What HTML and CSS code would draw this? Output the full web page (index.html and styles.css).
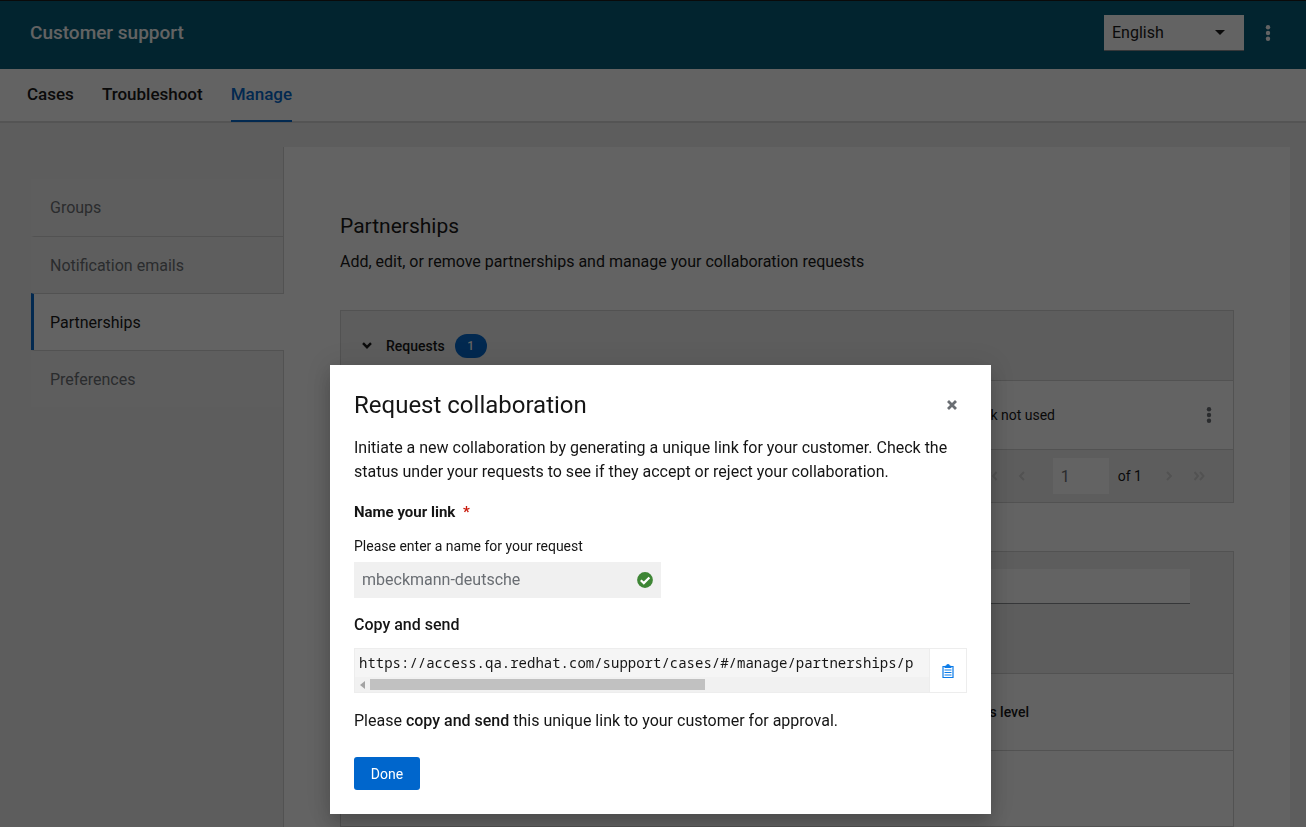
FILE: index.html
```
<!DOCTYPE html>
<html lang="en">
<head>
<meta charset="utf-8">
<meta name="viewport" content="width=device-width, initial-scale=1">
<title>Customer support</title>
<link rel="stylesheet" href="styles.css">
</head>
<body>
<header class="masthead">
  <p class="masthead-title">Customer support</p>
  <div class="masthead-tools">
    <select class="language" aria-label="Language"><option>English</option></select>
    <button class="kebab kebab-light" type="button" aria-label="More options">
      <svg width="6" height="16" viewBox="0 0 6 16" fill="currentColor"><circle cx="3" cy="2.3" r="2.2"/><circle cx="3" cy="8" r="2.2"/><circle cx="3" cy="13.7" r="2.2"/></svg>
    </button>
  </div>
</header>
<nav class="primary-nav" aria-label="Primary">
  <a href="#cases">Cases</a>
  <a href="#troubleshoot">Troubleshoot</a>
  <a href="#manage" class="current" aria-current="page">Manage</a>
</nav>
<main class="workspace">
  <nav class="side-tabs" aria-label="Manage">
    <a href="#groups">Groups</a>
    <a href="#notifications">Notification emails</a>
    <a href="#partnerships" class="current" aria-current="page">Partnerships</a>
    <a href="#preferences">Preferences</a>
  </nav>
  <section class="panel">
    <h1>Partnerships</h1>
    <p class="lead">Add, edit, or remove partnerships and manage your collaboration requests</p>
    <div class="card requests">
      <div class="card-head">
        <button class="toggle" type="button" aria-expanded="true">
          <svg width="10" height="7" viewBox="0 0 10 7" fill="none" stroke="currentColor" stroke-width="2.4"><path d="M1 1.2 5 5.2 9 1.2"/></svg>
          Requests
        </button>
        <span class="badge">1</span>
      </div>
      <div class="card-row">
        <span class="status">Link not used</span>
        <button class="kebab" type="button" aria-label="Request actions">
          <svg width="6" height="16" viewBox="0 0 6 16" fill="currentColor"><circle cx="3" cy="2.3" r="2.2"/><circle cx="3" cy="8" r="2.2"/><circle cx="3" cy="13.7" r="2.2"/></svg>
        </button>
      </div>
      <div class="pager">
        <button type="button" aria-label="First page" disabled><svg width="12" height="10" viewBox="0 0 12 10" fill="none" stroke="currentColor" stroke-width="2"><path d="M5 1 1.500 5 5 9M10.500 1 7 5l3.500 4"/></svg></button>
        <button type="button" aria-label="Previous page" disabled><svg width="12" height="10" viewBox="0 0 12 10" fill="none" stroke="currentColor" stroke-width="2"><path d="M8 1 4 5l4 4"/></svg></button>
        <input type="text" value="1" aria-label="Current page" disabled>
        <span class="pager-total">of 1</span>
        <button type="button" aria-label="Next page" disabled><svg width="12" height="10" viewBox="0 0 12 10" fill="none" stroke="currentColor" stroke-width="2"><path d="m4 1 4 4-4 4"/></svg></button>
        <button type="button" aria-label="Last page" disabled><svg width="12" height="10" viewBox="0 0 12 10" fill="none" stroke="currentColor" stroke-width="2"><path d="M1.500 1 5 5 1.500 9M7 1l3.500 4L7 9"/></svg></button>
      </div>
    </div>
    <div class="card">
      <div class="card-filter"><input type="search" aria-label="Search partnerships"></div>
      <div class="card-columns"><span class="status">Access level</span></div>
      <div class="card-entry"></div>
    </div>
  </section>
</main>
<div class="backdrop">
  <div class="modal" role="dialog" aria-modal="true" aria-labelledby="modal-title">
    <div class="modal-head">
      <h2 id="modal-title">Request collaboration</h2>
      <button class="close" type="button" aria-label="Close">
        <svg width="10" height="10" viewBox="0 0 10 10" stroke="currentColor" stroke-width="2.8" stroke-linecap="square"><path d="m2 2 6 6M8 2 2 8"/></svg>
      </button>
    </div>
    <p class="intro">Initiate a new collaboration by generating a unique link for your customer. Check the status under your requests to see if they accept or reject your collaboration.</p>
    <label class="field-label" for="link-name">Name your link <span class="required">*</span></label>
    <p class="hint" id="link-hint">Please enter a name for your request</p>
    <div class="name-field">
      <input id="link-name" type="text" value="mbeckmann-deutsche" aria-describedby="link-hint" disabled>
      <svg width="16" height="16" viewBox="0 0 16 16"><circle cx="8" cy="8" r="7.900" fill="#3e8635"/><path d="m3.800 8.200 3 2.900 5.600-5.700" fill="none" stroke="#fff" stroke-width="2.200"/></svg>
    </div>
    <h3>Copy and send</h3>
    <div class="copy-box">
      <div class="copy-scroll">
        <code>https://access.qa.redhat.com/support/cases/#/manage/partnerships/p</code>
        <div class="scrollbar">
          <svg width="5" height="8" viewBox="0 0 5 8"><path d="M5 0v8L0 4z" fill="#a3a3a3"/></svg>
          <div class="track"><div class="thumb"></div></div>
        </div>
      </div>
      <button class="copy" type="button" aria-label="Copy link">
        <svg width="12" height="14" viewBox="0 0 12 14"><path d="M1 2.500h10v11H1z" fill="#fff" stroke="#0a7be8" stroke-width="1.200"/><path d="M2.500 4V2l1.700-.5a1.800 1.500 0 0 1 3.600 0L9.500 2v2z" fill="#0a7be8"/><path d="M2.500 6h7M2.500 8.500h7M2.500 11h7" stroke="#0a7be8" stroke-width="1"/></svg>
      </button>
    </div>
    <p class="outro">Please <strong>copy and send</strong> this unique link to your customer for approval.</p>
    <button class="done" type="button">Done</button>
  </div>
</div>
</body>
</html>
```
FILE: styles.css
```
* { box-sizing: border-box; }

body {
  display: flex;
  flex-direction: column;
  height: 100vh;
  margin: 0;
  overflow: hidden;
  background: #f0f0f0;
  color: #151515;
  font-family: Roboto, "Liberation Sans", sans-serif;
  font-size: 16px;
  line-height: 24px;
}

h1, h2, h3, p { margin: 0; font-weight: 400; }
a { color: inherit; text-decoration: none; }
button, input, select { margin: 0; border: 0; color: inherit; font: inherit; }
button {
  display: flex;
  align-items: center;
  justify-content: center;
  padding: 0;
  background: none;
}

.masthead {
  display: flex;
  flex: none;
  align-items: center;
  justify-content: space-between;
  height: 69px;
  padding: 0 28px 4px 30px;
  border-top: 1px solid #151515;
  background: #005a77;
  color: #fff;
}
.masthead-title { font-size: 19px; font-weight: 500; line-height: 26px; }
.masthead-tools { display: flex; align-items: center; gap: 14px; }
.language {
  width: 140px;
  height: 36px;
  padding: 0 24px 0 8px;
  appearance: none;
  border-bottom: 1px solid #8a8d90;
  border-radius: 0;
  background: #fff url("data:image/svg+xml,%3Csvg xmlns='http://www.w3.org/2000/svg' width='10' height='5'%3E%3Cpath d='M0 0h10L5 5z' fill='%23151515'/%3E%3C/svg%3E") no-repeat right 19px center;
  color: #151515;
}
.kebab { width: 20px; height: 32px; color: #6a6e73; }
.kebab-light { color: #fff; }

.primary-nav {
  display: flex;
  flex: none;
  gap: 28px;
  height: 54px;
  padding: 0 27px;
  border-bottom: 2px solid #d8d8d8;
  background: #fff;
  font-size: 17px;
  font-weight: 500;
  line-height: 51px;
}
.primary-nav .current {
  height: 53px;
  border-bottom: 2px solid #06c;
  color: #06c;
}

.workspace {
  display: grid;
  flex: 1;
  grid-template-columns: 252px 1fr;
  padding: 24px 16px 0 31px;
}
.side-tabs { padding-top: 32px; color: #6a6e73; }
.side-tabs a {
  display: block;
  height: 57px;
  padding-left: 16px;
  border-left: 3px solid #f2f2f2;
  background: #f2f2f2;
  line-height: 57px;
}
.side-tabs a + a { border-top: 1px solid #d2d2d2; }
.side-tabs .current {
  position: relative;
  margin-right: -1px;
  border-left-color: #06c;
  background: #fff;
  color: #151515;
}

.panel {
  padding: 63px 56px 0;
  border-left: 1px solid #d2d2d2;
  background: #fff;
}
.panel h1 { font-size: 21px; line-height: 32px; }
.lead { margin-top: 8px; }
.card {
  margin-top: 48px;
  border: 1px solid #d2d2d2;
  font-size: 14px;
}
.requests { margin-top: 36px; }
.card-head {
  display: flex;
  align-items: center;
  gap: 10px;
  height: 70px;
  padding-left: 21px;
  border-bottom: 1px solid #d2d2d2;
  background: #f0f0f0;
}
.toggle { gap: 14px; font-size: 14px; font-weight: 500; }
.badge {
  width: 32px;
  border-radius: 12px;
  background: #06c;
  color: #fff;
  font-size: 12px;
  font-weight: 500;
  text-align: center;
}
.card-row, .card-columns {
  display: grid;
  grid-template-columns: 1fr 178px;
  align-items: center;
  height: 69px;
  border-bottom: 1px solid #d2d2d2;
}
.status { text-align: right; }
.card-row .kebab { margin-left: auto; margin-right: 14px; }
.pager {
  display: flex;
  align-items: center;
  justify-content: flex-end;
  height: 52px;
  padding-right: 19px;
  background: #f0f0f0;
}
.pager button { width: 30px; height: 36px; color: #d2d2d2; }
.pager input {
  width: 56px;
  height: 36px;
  margin-left: 16px;
  padding: 0 8px;
  background: #fff;
  color: #6a6e73;
  font-size: 16px;
}
.pager-total { margin: 0 12px 0 9px; }
.card-filter {
  display: flex;
  height: 122px;
  padding: 17px 43px 0 16px;
  border-bottom: 1px solid #d2d2d2;
  background: #f0f0f0;
}
.card-filter input {
  flex: 1;
  height: 35px;
  border-bottom: 1px solid #8a8d90;
  background: #fff;
}
.card-columns {
  grid-template-columns: 1fr 204px;
  height: 77px;
  font-weight: 500;
}
.card-entry { height: 76px; border-bottom: 1px solid #d2d2d2; }

.backdrop {
  position: fixed;
  inset: 0;
  display: flex;
  align-items: flex-end;
  justify-content: center;
  padding: 0 0 13px 15px;
  background: rgba(3, 3, 3, .62);
}
.modal {
  width: 661px;
  max-width: 100%;
  padding: 24px;
  background: #fff;
  box-shadow: 0 12px 16px rgba(3, 3, 3, .16), 0 0 24px rgba(3, 3, 3, .12);
}
.modal-head { display: flex; align-items: center; justify-content: space-between; }
.modal-head h2 { font-size: 24px; line-height: 32px; }
.close { width: 30px; height: 30px; color: #6a6e73; }
.intro { margin-top: 15px; }
.field-label {
  display: block;
  margin-top: 16px;
  font-size: 15px;
  font-weight: 700;
}
.required { margin-left: 4px; color: #c9190b; }
.hint { margin-top: 10px; font-size: 14px; }
.name-field {
  display: flex;
  align-items: center;
  width: 307px;
  height: 36px;
  margin-top: 4px;
  padding: 0 8px;
  background: #f0f0f0;
  color: #6a6e73;
}
.name-field input { flex: 1; min-width: 0; padding: 0; background: none; }
.modal h3 { margin-top: 15px; font-size: 16px; font-weight: 500; }
.copy-box {
  display: flex;
  height: 45px;
  margin-top: 11px;
  border: 1px solid #ededed;
}
.copy-scroll {
  flex: 1;
  min-width: 0;
  overflow: hidden;
  border-right: 1px solid #ededed;
  background: #f5f5f5;
}
.copy-scroll code {
  display: block;
  height: 28px;
  padding-left: 4px;
  font: 14px/28px "Noto Sans Mono", "DejaVu Sans Mono", monospace;
  white-space: nowrap;
}
.scrollbar {
  display: flex;
  align-items: center;
  gap: 5px;
  height: 15px;
  padding-left: 5px;
  background: #f1f1f1;
}
.track { flex: 1; }
.thumb { width: 60%; height: 11px; background: #c1c1c1; }
.copy { width: 36px; }
.outro { margin-top: 16px; }
.outro strong { font-weight: 500; }
.done {
  width: 66px;
  height: 33px;
  margin-top: 24px;
  border-radius: 3px;
  background: #06c;
  color: #fff;
  font-size: 14px;
}
```
